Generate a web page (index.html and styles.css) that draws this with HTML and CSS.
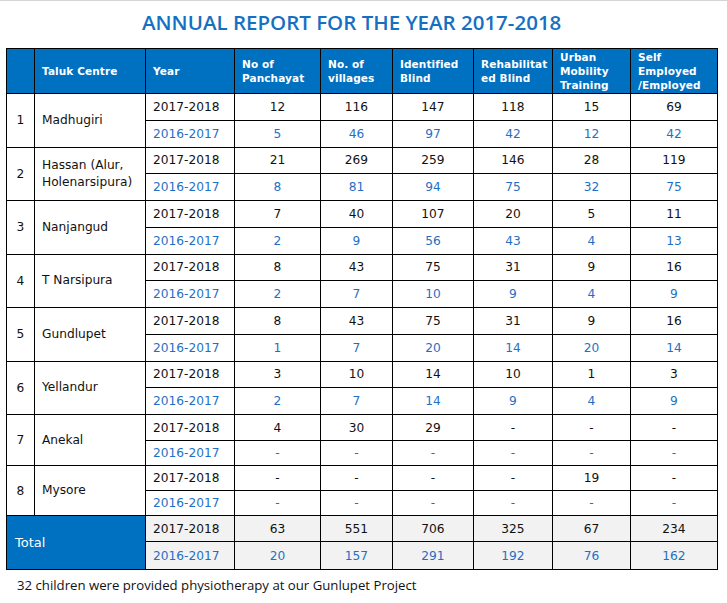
FILE: index.html
```html
<!DOCTYPE html>
<html>
<head>
<meta charset="utf-8">
<link rel="stylesheet" href="styles.css">
</head>
<body>
<div class="page">
  <h1 class="title">ANNUAL REPORT FOR THE YEAR 2017-2018</h1>
  <table class="report">
    <colgroup>
      <col class="c-no"><col class="c-taluk"><col class="c-year"><col class="c-pan"><col class="c-vil"><col class="c-idb"><col class="c-reh"><col class="c-urb"><col class="c-self">
    </colgroup>
    <thead>
      <tr class="head">
        <th></th>
        <th>Taluk Centre</th>
        <th>Year</th>
        <th>No of<br>Panchayat</th>
        <th>No. of<br>villages</th>
        <th>Identified<br>Blind</th>
        <th>Rehabilitat<br>ed Blind</th>
        <th>Urban<br>Mobility<br>Training</th>
        <th>Self<br>Employed<br>/Employed</th>
      </tr>
    </thead>
    <tbody>
      <tr class="cur r1"><td class="num" rowspan="2">1</td><td class="taluk" rowspan="2">Madhugiri</td><td class="yr">2017-2018</td><td>12</td><td>116</td><td>147</td><td>118</td><td>15</td><td>69</td></tr>
      <tr class="prev r1"><td class="yr">2016-2017</td><td>5</td><td>46</td><td>97</td><td>42</td><td>12</td><td>42</td></tr>

      <tr class="cur r1"><td class="num" rowspan="2">2</td><td class="taluk" rowspan="2">Hassan (Alur,<br>Holenarsipura)</td><td class="yr">2017-2018</td><td>21</td><td>269</td><td>259</td><td>146</td><td>28</td><td>119</td></tr>
      <tr class="prev r1"><td class="yr">2016-2017</td><td>8</td><td>81</td><td>94</td><td>75</td><td>32</td><td>75</td></tr>

      <tr class="cur r1"><td class="num" rowspan="2">3</td><td class="taluk" rowspan="2">Nanjangud</td><td class="yr">2017-2018</td><td>7</td><td>40</td><td>107</td><td>20</td><td>5</td><td>11</td></tr>
      <tr class="prev r1"><td class="yr">2016-2017</td><td>2</td><td>9</td><td>56</td><td>43</td><td>4</td><td>13</td></tr>

      <tr class="cur r1"><td class="num" rowspan="2">4</td><td class="taluk" rowspan="2">T Narsipura</td><td class="yr">2017-2018</td><td>8</td><td>43</td><td>75</td><td>31</td><td>9</td><td>16</td></tr>
      <tr class="prev r1"><td class="yr">2016-2017</td><td>2</td><td>7</td><td>10</td><td>9</td><td>4</td><td>9</td></tr>

      <tr class="cur r1"><td class="num" rowspan="2">5</td><td class="taluk" rowspan="2">Gundlupet</td><td class="yr">2017-2018</td><td>8</td><td>43</td><td>75</td><td>31</td><td>9</td><td>16</td></tr>
      <tr class="prev r1"><td class="yr">2016-2017</td><td>1</td><td>7</td><td>20</td><td>14</td><td>20</td><td>14</td></tr>

      <tr class="cur r1"><td class="num" rowspan="2">6</td><td class="taluk" rowspan="2">Yellandur</td><td class="yr">2017-2018</td><td>3</td><td>10</td><td>14</td><td>10</td><td>1</td><td>3</td></tr>
      <tr class="prev r1"><td class="yr">2016-2017</td><td>2</td><td>7</td><td>14</td><td>9</td><td>4</td><td>9</td></tr>

      <tr class="cur r2"><td class="num" rowspan="2">7</td><td class="taluk" rowspan="2">Anekal</td><td class="yr">2017-2018</td><td>4</td><td>30</td><td>29</td><td>-</td><td>-</td><td>-</td></tr>
      <tr class="prev r3"><td class="yr">2016-2017</td><td>-</td><td>-</td><td>-</td><td>-</td><td>-</td><td>-</td></tr>

      <tr class="cur r3"><td class="num" rowspan="2">8</td><td class="taluk" rowspan="2">Mysore</td><td class="yr">2017-2018</td><td>-</td><td>-</td><td>-</td><td>-</td><td>19</td><td>-</td></tr>
      <tr class="prev r3"><td class="yr">2016-2017</td><td>-</td><td>-</td><td>-</td><td>-</td><td>-</td><td>-</td></tr>

      <tr class="cur total r2"><td class="total-label" colspan="2" rowspan="2">Total</td><td class="yr">2017-2018</td><td>63</td><td>551</td><td>706</td><td>325</td><td>67</td><td>234</td></tr>
      <tr class="prev total r4"><td class="yr">2016-2017</td><td>20</td><td>157</td><td>291</td><td>192</td><td>76</td><td>162</td></tr>
    </tbody>
  </table>
  <p class="note">32 children were provided physiotherapy at our Gunlupet Project</p>
</div>
</body>
</html>
```
FILE: styles.css
```css
html, body {
  margin: 0;
  padding: 0;
  background: #ffffff;
}

.page {
  border-top: 1px solid #d4d4d4;
  font-family: "DejaVu Sans", Verdana, sans-serif;
}

.title {
  margin: 0;
  padding: 8px 0 0 142px;
  height: 39px;
  box-sizing: content-box;
  font-family: "Open Sans", "Noto Sans", sans-serif;
  font-weight: 600;
  font-size: 20.5px;
  line-height: 27px;
  color: #1670c2;
  letter-spacing: 0;
  white-space: nowrap;
}

.report {
  margin-left: 6px;
  width: 712px;
  table-layout: fixed;
  border-collapse: collapse;
  font-size: 12.2px;
}

.c-no { width: 28px; }
.c-taluk { width: 111px; }
.c-year { width: 89px; }
.c-pan { width: 86px; }
.c-vil { width: 72px; }
.c-idb { width: 81px; }
.c-reh { width: 79px; }
.c-urb { width: 78px; }
.c-self { width: 87px; }

.report th,
.report td {
  border: 1px solid #000;
  padding: 0;
}

.head th {
  height: 44px;
  background: #0070c0;
  color: #ffffff;
  font-size: 10.5px;
  font-weight: bold;
  line-height: 14.3px;
  text-align: left;
  vertical-align: middle;
  padding: 0 0 0 7px;
  letter-spacing: 0.1px;
}

.report td {
  text-align: center;
  vertical-align: middle;
  line-height: 14px;
}

.r1 td { height: 25.75px; }
.r2 td { height: 25px; }
.r3 td { height: 24px; }
.r4 td { height: 27px; }

.report td.num {
  text-align: center;
}

.report td.taluk {
  text-align: left;
  padding-left: 7px;
  line-height: 17px;
}

.report td.yr {
  text-align: left;
  padding-left: 7px;
}

.cur td { color: #111111; }
.prev td { color: #1f6fc5; }

.total td { background: #f2f2f2; }

.report td.total-label {
  background: #0070c0;
  color: #ffffff;
  text-align: left;
  padding-left: 8px;
  font-size: 13px;
  font-family: "DejaVu Sans", Tahoma, sans-serif;
}

.note {
  margin: 7px 0 0 17px;
  font-family: "Open Sans", Lato, sans-serif;
  font-size: 13.2px;
  line-height: 16px;
  color: #111111;
}
```
